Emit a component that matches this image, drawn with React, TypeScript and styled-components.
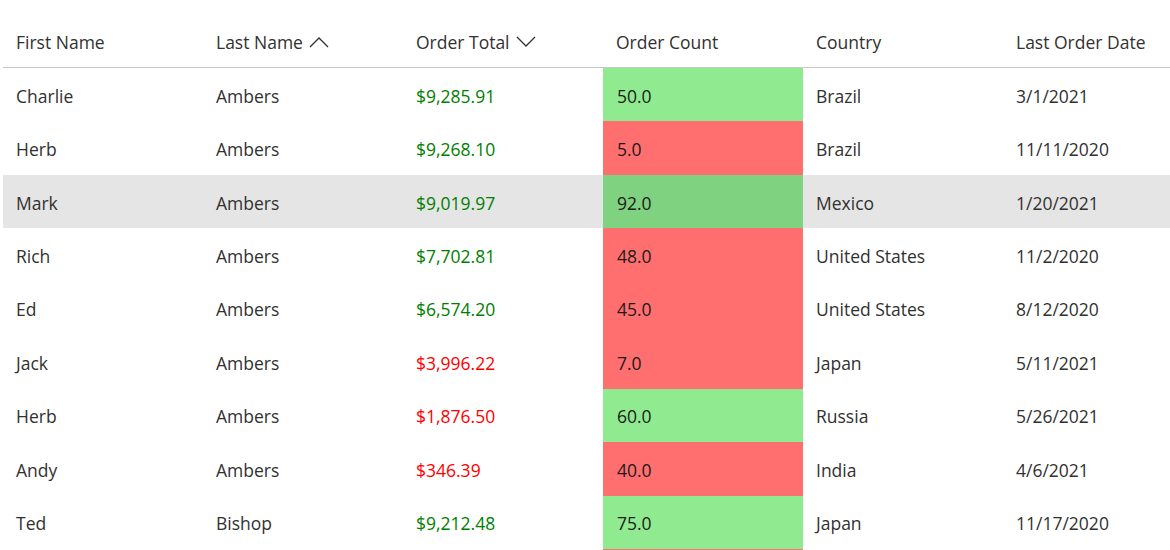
import styled, { createGlobalStyle } from 'styled-components'

const GlobalStyle = createGlobalStyle`
  html, body {
    margin: 0;
    padding: 0;
    background: #ffffff;
    overflow: hidden;
  }
  body {
    font-family: "Open Sans", "Noto Sans", "Liberation Sans", sans-serif;
    color: #323130;
  }
`

const Wrapper = styled.div`
  padding: 0 0 0 3px;
  width: 1167px;
`

const Grid = styled.div`
  display: grid;
  grid-template-columns: 200px 200px 200px 200px 200px 167px;
`

const HeaderCell = styled.div`
  height: 68px;
  display: flex;
  align-items: center;
  gap: 6px;
  padding: 16px 0 0 13px;
  box-sizing: border-box;
  font-size: 17.5px;
  color: #323130;
  border-bottom: 1px solid #c8c8c8;
  white-space: nowrap;
`

const Row = styled.div<{ $selected?: boolean }>`
  display: contents;
  & > div {
    background-color: ${p => (p.$selected ? '#e5e5e5' : 'transparent')};
  }
`

const Cell = styled.div<{ $tone?: 'green' | 'red' }>`
  height: 53.44px;
  display: flex;
  align-items: center;
  padding: 2px 0 0 13px;
  box-sizing: border-box;
  font-size: 17.5px;
  white-space: nowrap;
  color: ${p => (p.$tone === 'green' ? '#008000' : p.$tone === 'red' ? '#ff0000' : '#323130')};
`

const CountCell = styled(Cell)<{ $good: boolean; $sel?: boolean }>`
  && {
    background-color: ${p => (p.$good ? (p.$sel ? '#7fd27f' : '#90eb90') : '#ff6f6f')};
  }
  padding-left: 14px;
  color: #1b1b1b;
`

const Chevron = ({ up }: { up?: boolean }) => (
  <svg width="20" height="12" viewBox="0 0 20 12" fill="none" stroke="#323130" strokeWidth="1.3">
    {up ? <path d="M1 11 L10 2 L19 11" /> : <path d="M1 1 L10 10 L19 1" />}
  </svg>
)

const rows = [
  { first: 'Charlie', last: 'Ambers', total: '$9,285.91', up: true, count: '50.0', good: true, country: 'Brazil', date: '3/1/2021' },
  { first: 'Herb', last: 'Ambers', total: '$9,268.10', up: true, count: '5.0', good: false, country: 'Brazil', date: '11/11/2020' },
  { first: 'Mark', last: 'Ambers', total: '$9,019.97', up: true, count: '92.0', good: true, country: 'Mexico', date: '1/20/2021', selected: true },
  { first: 'Rich', last: 'Ambers', total: '$7,702.81', up: true, count: '48.0', good: false, country: 'United States', date: '11/2/2020' },
  { first: 'Ed', last: 'Ambers', total: '$6,574.20', up: true, count: '45.0', good: false, country: 'United States', date: '8/12/2020' },
  { first: 'Jack', last: 'Ambers', total: '$3,996.22', up: false, count: '7.0', good: false, country: 'Japan', date: '5/11/2021' },
  { first: 'Herb', last: 'Ambers', total: '$1,876.50', up: false, count: '60.0', good: true, country: 'Russia', date: '5/26/2021' },
  { first: 'Andy', last: 'Ambers', total: '$346.39', up: false, count: '40.0', good: false, country: 'India', date: '4/6/2021' },
  { first: 'Ted', last: 'Bishop', total: '$9,212.48', up: true, count: '75.0', good: true, country: 'Japan', date: '11/17/2020' },
  { first: 'Ann', last: 'Bishop', total: '$8,001.00', up: true, count: '12.0', good: false, country: 'Canada', date: '2/2/2021' },
]

const App = () => {
  return (
    <Wrapper>
      <GlobalStyle />
      <Grid>
        <HeaderCell>First Name</HeaderCell>
        <HeaderCell>Last Name <Chevron up /></HeaderCell>
        <HeaderCell>Order Total <Chevron /></HeaderCell>
        <HeaderCell>Order Count</HeaderCell>
        <HeaderCell>Country</HeaderCell>
        <HeaderCell>Last Order Date</HeaderCell>
        {rows.map((r, idx) => (
          <Row key={idx} $selected={r.selected}>
            <Cell>{r.first}</Cell>
            <Cell>{r.last}</Cell>
            <Cell $tone={r.up ? 'green' : 'red'}>{r.total}</Cell>
            <CountCell $good={r.good} $sel={r.selected}>{r.count}</CountCell>
            <Cell>{r.country}</Cell>
            <Cell>{r.date}</Cell>
          </Row>
        ))}
      </Grid>
    </Wrapper>
  )
}

export default App
